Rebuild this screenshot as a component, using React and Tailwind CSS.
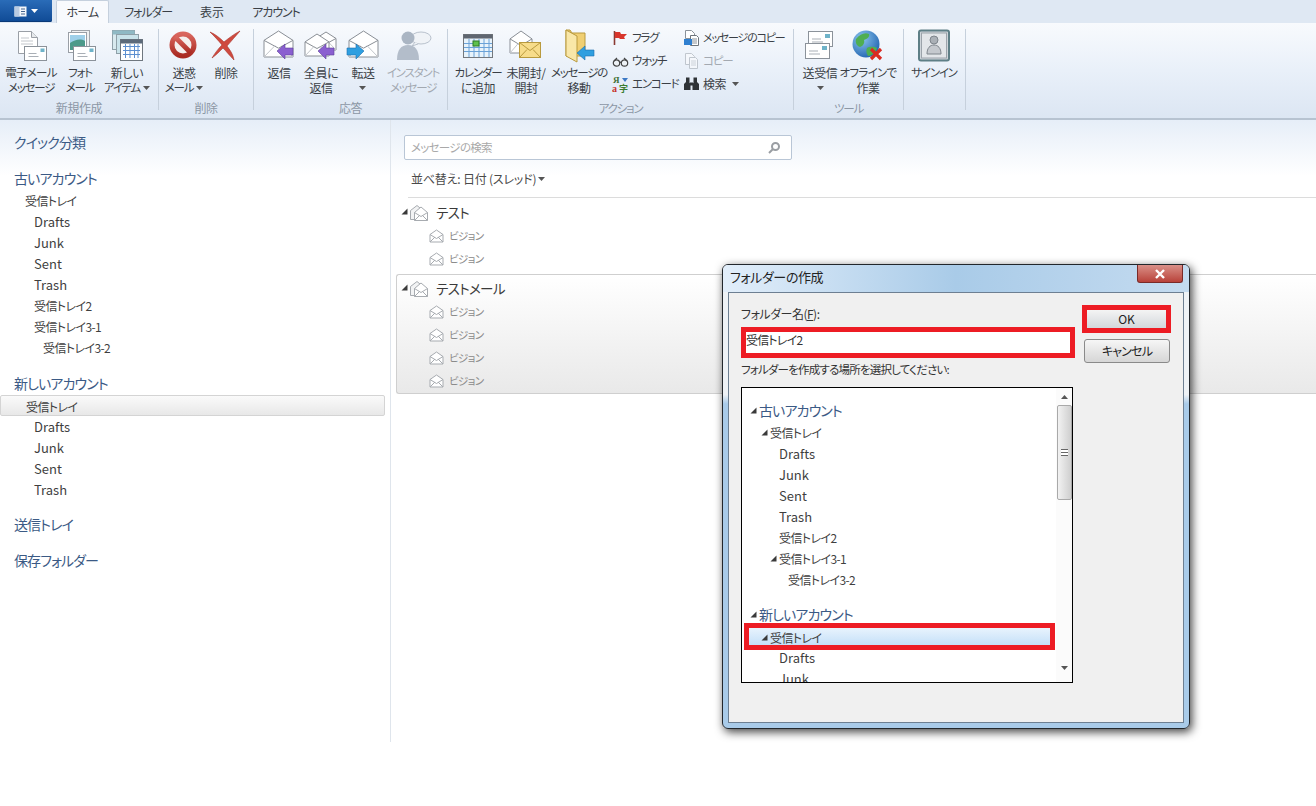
// ribbon labels: the katakana in the shot is much narrower than the kanji
const ribbonText = (s) =>
  s.length > 7
    ? "text-[11px] tracking-[-1.2px]"
    : /^[ァ-ヶーの]+$/.test(s)
      ? "text-[11.5px] tracking-[-1.2px]"
      : /[ァ-ヶ]/.test(s)
        ? "text-[11.5px] tracking-[-0.7px]"
        : "text-[12px] tracking-[-0.4px]";
const rowText = (s) => (/[ァ-ヶ]/.test(s) ? "text-[12px] tracking-[-0.6px]" : "text-[13px]");

function Tri({ className = "" }) {
  return (
    <svg width="7" height="7" viewBox="0 0 7 7" className={className}>
      <polygon points="6.5,0.5 6.5,6.5 0.5,6.5" fill="#3a3a3a" />
    </svg>
  );
}

function Caret({ className = "" }) {
  return (
    <svg width="7" height="4" viewBox="0 0 7 4" className={className}>
      <polygon points="0,0 7,0 3.5,4" fill="#555" />
    </svg>
  );
}

function Envelope({ x = 0, y = 0, w = 30, h = 26, fill = "#fff", stroke = "#8a8f96" }) {
  const top = y + h * 0.36;
  return (
    <g>
      <path d={`M${x} ${top}L${x + w / 2} ${y}L${x + w} ${top}V${y + h}H${x}Z`} fill={fill} stroke={stroke} />
      <path d={`M${x} ${top}L${x + w / 2} ${y + h * 0.66}L${x + w} ${top}`} fill="none" stroke={stroke} />
      <path d={`M${x} ${y + h}L${x + w * 0.38} ${y + h * 0.56}M${x + w} ${y + h}L${x + w * 0.62} ${y + h * 0.56}`} stroke="#c2c6cb" fill="none" />
    </g>
  );
}

function MiniMail({ x, y, w = 22, h = 14 }) {
  return (
    <g>
      <rect x={x} y={y} width={w} height={h} fill="#fff" stroke="#8b929a" />
      <rect x={x + w - 6} y={y + 2} width="4" height="3.5" fill="#6fb3c9" />
      <path d={`M${x + 4} ${y + 7}h8M${x + 4} ${y + 10}h10`} stroke="#a9afb6" />
    </g>
  );
}

function LeftArrow({ x, y, color }) {
  return <path d={`M${x} ${y}l8-7v4h8v7h-8v4z`} fill={color} stroke="#5d3f97" strokeWidth="0.6" />;
}

function Big({ children, w = 34 }) {
  return <svg width={w} height="34" viewBox={`0 0 ${w} 34`}>{children}</svg>;
}

const icons = {
  mail: (
    <Big>
      <path d="M4.5 2.5h13l6 6v16h-19z" fill="#fff" stroke="#9a9fa6" />
      <path d="M17.5 2.5v6h6" fill="#e6e9ec" stroke="#9a9fa6" />
      <path d="M7 9h8M7 12h12M7 15h12" stroke="#c3c7cc" />
      <MiniMail x={10.5} y={17.5} />
    </Big>
  ),
  photo: (
    <Big>
      <rect x="8.5" y="1.5" width="18" height="20" fill="#eef0f2" stroke="#a0a5ab" />
      <rect x="5.5" y="3.5" width="18" height="20" fill="#fff" stroke="#9a9fa6" />
      <rect x="7" y="6" width="15" height="15" fill="#4d9a8a" />
      <path d="M7 6h15v6C17 9 12 11 7 14z" fill="#9ed0ea" />
      <MiniMail x={10.5} y={17.5} />
    </Big>
  ),
  items: (
    <Big>
      <rect x="2.5" y="1.5" width="22" height="19" fill="#d8e9ee" stroke="#8fa0a8" />
      <rect x="2.5" y="1.5" width="22" height="4" fill="#8fb9c4" />
      <rect x="6.5" y="5.5" width="22" height="19" fill="#c9e3ea" stroke="#8fa0a8" />
      <rect x="10.5" y="10.5" width="22" height="21" fill="#fff" stroke="#6f777f" />
      <rect x="10.5" y="10.5" width="22" height="4" fill="#5c6a7a" />
      <path d="M13 17.5h17M13 21.5h17M13 25.5h17M15.5 15v14M20 15v14M24.5 15v14M28 15v14" stroke="#5c8fd0" />
    </Big>
  ),
  block: (
    <Big>
      <defs>
        <linearGradient id="rd" x1="0" y1="0" x2="0" y2="1"><stop offset="0" stopColor="#d9665e" /><stop offset="1" stopColor="#a92a22" /></linearGradient>
      </defs>
      <circle cx="16" cy="16" r="11" fill="#f4efee" stroke="url(#rd)" strokeWidth="5" />
      <path d="M8 8l16 16" stroke="url(#rd)" strokeWidth="5" />
    </Big>
  ),
  del: (
    <Big>
      <path d="M1 3c5 2 10 6 14 10c5-4 10-8 16-11c-4 5-9 10-13 15c3 4 6 8 7 14c-4-4-8-9-11-12c-4 4-7 7-11 10c3-5 6-9 10-13C9 11 5 7 1 3z" fill="#cf4a3f" stroke="#a8322a" strokeWidth="0.6" />
    </Big>
  ),
  reply: (
    <Big>
      <Envelope x={2} y={2} w={29} h={26} />
      <LeftArrow x={15} y={22} color="#8a5fd0" />
    </Big>
  ),
  replyAll: (
    <Big>
      <Envelope x={12} y={3} w={20} h={18} />
      <Envelope x={1} y={5} w={24} h={22} />
      <LeftArrow x={14} y={22} color="#8a5fd0" />
    </Big>
  ),
  forward: (
    <Big>
      <Envelope x={3} y={2} w={29} h={26} />
      <path d="M18 22l-8-7v4H1v7h9v4z" fill="#2f9fe0" stroke="#1c6fae" strokeWidth="0.6" />
    </Big>
  ),
  im: (
    <Big w={38}>
      <ellipse cx="27" cy="9" rx="10" ry="6" fill="#f0f3f7" stroke="#b9c2cd" />
      <path d="M21 13l-3 4 6-2" fill="#f0f3f7" stroke="#b9c2cd" />
      <circle cx="14" cy="9" r="6.5" fill="#aab5c3" />
      <path d="M3 31c0-10 4-15 11-15s11 5 11 15z" fill="#b3bdca" />
    </Big>
  ),
  cal: (
    <Big>
      <rect x="2.5" y="5.5" width="29" height="23" fill="#e8f3fb" stroke="#74787d" />
      <rect x="2.5" y="5.5" width="29" height="4" fill="#5f6670" />
      <path d="M3 14.5h28M3 18.5h28M3 22.5h28M8 10v18M13 10v18M18 10v18M23 10v18M28 10v18" stroke="#6aa2d8" />
      <rect x="12" y="12" width="6" height="5" fill="#5fc14d" stroke="#2e7d25" />
    </Big>
  ),
  unread: (
    <Big>
      <Envelope x={1} y={2} w={22} h={22} />
      <rect x="10.5" y="13.5" width="21" height="15" fill="#f7dc8a" stroke="#b99a3e" />
      <path d="M10.5 13.5l10.5 8 10.5-8M10.5 28.5l7.5-8M31.5 28.5l-7.5-8" fill="none" stroke="#b99a3e" />
    </Big>
  ),
  move: (
    <Big>
      <path d="M4 1h4l2 3h13v23H4z" fill="#f0cf73" stroke="#b99a3e" />
      <path d="M4 1l11 6v26L4 27z" fill="#f9e7a8" stroke="#b99a3e" />
      <path d="M15 24l8-7v4h9v6h-9v4z" fill="#2f9fe0" stroke="#1c6fae" strokeWidth="0.6" />
    </Big>
  ),
  sendRecv: (
    <Big>
      <rect x="5.5" y="2.5" width="24" height="15" fill="#fff" stroke="#8b929a" />
      <rect x="22" y="5" width="5" height="4" fill="#6fb3c9" />
      <path d="M9 10h9M9 13h11" stroke="#a9afb6" />
      <rect x="2.5" y="14.5" width="24" height="15" fill="#fff" stroke="#8b929a" />
      <rect x="19" y="17" width="5" height="4" fill="#6fb3c9" />
      <path d="M6 22h9M6 25h11" stroke="#a9afb6" />
    </Big>
  ),
  offline: (
    <Big>
      <defs>
        <radialGradient id="gl" cx="0.35" cy="0.3" r="0.8"><stop offset="0" stopColor="#8cc6ee" /><stop offset="1" stopColor="#1c5fae" /></radialGradient>
      </defs>
      <circle cx="15" cy="15" r="13.5" fill="url(#gl)" />
      <path d="M5 10c4-5 9-7 13-5c1 3-2 5-5 6c1 3-1 6-4 7c-3-1-5-4-4-8zM16 19c4-2 8-1 10 0c-1 4-5 8-9 8c-2-3-2-6-1-8z" fill="#4fae52" />
      <path d="M20 20l10 10M30 20L20 30" stroke="#d92b22" strokeWidth="3.2" />
    </Big>
  ),
  signin: (
    <Big>
      <rect x="2" y="1.5" width="30" height="30" rx="2" fill="#cfd5da" stroke="#5e7f86" strokeWidth="2" />
      <rect x="4.5" y="4" width="25" height="25" fill="#e3e6e9" stroke="#9ca3aa" />
      <circle cx="17" cy="11" r="4" fill="#aab0b6" stroke="#7e858c" />
      <path d="M10 25c0-6 3-9 7-9s7 3 7 9z" fill="#c5c9ce" stroke="#7e858c" />
    </Big>
  ),
};

const smallIcons = {
  flag: (
    <svg width="17" height="16" viewBox="0 0 17 16">
      <path d="M2.5 1v14" stroke="#8a3a32" strokeWidth="1.6" />
      <path d="M3 2h5l1 2h6l-3 3 1 2H8L7 8H3z" fill="#d8352c" />
    </svg>
  ),
  watch: (
    <svg width="17" height="16" viewBox="0 0 17 16" fill="#eef2f6" stroke="#444" strokeWidth="1.2">
      <circle cx="4.5" cy="10" r="3.2" />
      <circle cx="12.5" cy="10" r="3.2" />
      <path d="M7.7 9.5c.8-.6 1-.6 1.6 0M2 8l3-3M15 8l-3-3" fill="none" />
    </svg>
  ),
  encode: (
    <svg width="17" height="18" viewBox="0 0 17 18" fontFamily="'Liberation Serif',serif" fontWeight="700">
      <text x="1" y="8" fontSize="9" fill="#3f6f35">Я</text>
      <polygon points="10,3 16,3 13,7" fill="#3c78c4" />
      <text x="0" y="17" fontSize="10" fill="#c7342b">a</text>
      <text x="7" y="17" fontSize="9" fill="#3c7d30" fontFamily="'Noto Sans CJK JP',sans-serif">字</text>
    </svg>
  ),
  copyMsg: (
    <svg width="17" height="18" viewBox="0 0 17 18">
      <path d="M2.5 1.5h6l3 3v5h-9z" fill="#fff" stroke="#8b929a" />
      <path d="M7.5 6.5h6l2 2v8h-8z" fill="#fff" stroke="#6e757c" />
      <path d="M9 10h5M9 12h5M9 14h5" stroke="#8b929a" />
      <rect x="1" y="10" width="8" height="6" fill="#2f7fd0" />
    </svg>
  ),
  copy: (
    <svg width="17" height="18" viewBox="0 0 17 18" opacity="0.45">
      <path d="M2.5 1.5h6l3 3v8h-9z" fill="#fff" stroke="#8b929a" />
      <path d="M6.5 5.5h6l2 2v9h-8z" fill="#fff" stroke="#8b929a" />
      <path d="M8 9h5M8 11h5M8 13h5" stroke="#a8aeb4" />
    </svg>
  ),
  find: (
    <svg width="17" height="16" viewBox="0 0 17 16" fill="#2f3337">
      <rect x="3" y="1.5" width="3.5" height="5" />
      <rect x="10.5" y="1.5" width="3.5" height="5" />
      <path d="M1 14V8l2-2h3l1.5 2v6zM9.5 14V8l1.5-2h3l2 2v6z" />
      <rect x="7" y="6.5" width="3" height="3" />
    </svg>
  ),
};

const groups = [
  {
    label: "新規作成",
    w: "w-[159px]",
    pl: "pl-[4px]",
    btns: [
      { w: "w-[54px]", icon: "mail", lines: ["電子メール", "メッセージ"] },
      { w: "w-[44px]", icon: "photo", lines: ["フォト", "メール"] },
      { w: "w-[50px]", icon: "items", lines: ["新しい", "アイテム"], caret: true },
    ],
  },
  {
    label: "削除",
    w: "w-[95px]",
    pl: "pl-[2px]",
    btns: [
      { w: "w-[46px]", icon: "block", lines: ["迷惑", "メール"], caret: true },
      { w: "w-[38px]", icon: "del", lines: ["削除"] },
    ],
  },
  {
    label: "応答",
    w: "w-[194px]",
    pl: "pl-[4px]",
    btns: [
      { w: "w-[42px]", icon: "reply", lines: ["返信"] },
      { w: "w-[42px]", icon: "replyAll", lines: ["全員に", "返信"] },
      { w: "w-[42px]", icon: "forward", lines: ["転送"], under: true },
      { w: "w-[58px]", icon: "im", lines: ["インスタント", "メッセージ"], muted: true },
    ],
  },
  {
    label: "アクション",
    w: "w-[346px]",
    pl: "pl-[5px]",
    btns: [
      { w: "w-[50px]", icon: "cal", lines: ["カレンダー", "に追加"] },
      { w: "w-[46px]", icon: "unread", lines: ["未開封/", "開封"] },
      { w: "w-[60px]", icon: "move", lines: ["メッセージの", "移動"] },
    ],
    small: true,
  },
  {
    label: "ツール",
    w: "w-[110px]",
    pl: "pl-[2px]",
    btns: [
      { w: "w-[48px]", icon: "sendRecv", lines: ["送受信"], under: true },
      { w: "w-[48px]", icon: "offline", lines: ["オフラインで", "作業"] },
    ],
  },
  {
    label: "",
    w: "w-[62px]",
    pl: "pl-[2px]",
    btns: [{ w: "w-[56px]", icon: "signin", lines: ["サインイン"] }],
  },
];

function RibbonButton({ b }) {
  return (
    <div className={`flex shrink-0 flex-col items-center ${b.w}`}>
      <div className="flex h-[34px] items-center justify-center">{icons[b.icon]}</div>
      <div className={`mt-[2px] whitespace-nowrap text-center leading-[15px] ${b.muted ? "text-[#a3a9b1]" : "text-[#3a3f46]"}`}>
        {b.lines.map((l, i) => (
          <div key={i} className={`flex items-center justify-center gap-[3px] ${ribbonText(l)}`}>
            {l}
            {b.caret && i === b.lines.length - 1 && <Caret />}
          </div>
        ))}
        {b.under && (
          <div className="flex h-[15px] items-center justify-center">
            <Caret />
          </div>
        )}
      </div>
    </div>
  );
}

function SmallItem({ icon, text, muted, caret }) {
  return (
    <div className={`flex h-[23px] items-center gap-[3px] whitespace-nowrap ${ribbonText(text)} ${muted ? "text-[#a3a9b1]" : "text-[#3a3f46]"}`}>
      <span className="flex w-[17px] justify-center">{smallIcons[icon]}</span>
      {text}
      {caret && <Caret className="ml-[3px]" />}
    </div>
  );
}

function Ribbon() {
  return (
    <div className="flex h-[97px] border-b-2 border-[#b7c3d1] bg-gradient-to-b from-[#f8fafd] via-[#e9f0f9] to-[#dce6f3] pt-[6px]">
      {groups.map((g, i) => (
        <div key={i} className={`flex h-[81px] shrink-0 flex-col border-r border-[#c6d0dc] ${g.w}`}>
          <div className={`flex h-[71px] shrink-0 ${g.pl}`}>
            {g.btns.map((b, j) => <RibbonButton key={j} b={b} />)}
            {g.small && (
              <div className="ml-[3px] -mt-[3px] flex gap-[3px]">
                <div className="w-[68px]">
                  <SmallItem icon="flag" text="フラグ" />
                  <SmallItem icon="watch" text="ウォッチ" />
                  <SmallItem icon="encode" text="エンコード" />
                </div>
                <div>
                  <SmallItem icon="copyMsg" text="メッセージのコピー" />
                  <SmallItem icon="copy" text="コピー" muted />
                  <SmallItem icon="find" text="検索" caret />
                </div>
              </div>
            )}
          </div>
          <div className={`h-[16px] shrink-0 text-center leading-[16px] text-[#8c97a5] ${ribbonText(g.label)}`}>{g.label}</div>
        </div>
      ))}
    </div>
  );
}

function Tabs() {
  return (
    <div className="flex h-[23px] items-end bg-[#dfe8f3] text-[12px] text-[#3a3f46]">
      <div className="flex h-[22px] w-[52px] items-center justify-center gap-[4px] self-start rounded-br-[2px] bg-gradient-to-b from-[#2a6cb8] to-[#0f4a95] shadow-[inset_0_-1px_0_#0b3a78]">
        <svg width="13" height="11" viewBox="0 0 13 11">
          <rect x="0.5" y="0.5" width="12" height="10" fill="#f4f7fb" />
          <rect x="0.5" y="0.5" width="5" height="10" fill="#b9cbe2" />
          <path d="M7 3h4M7 5.5h4M7 8h4" stroke="#44648f" />
        </svg>
        <svg width="7" height="4" viewBox="0 0 7 4"><polygon points="0,0 7,0 3.5,4" fill="#fff" /></svg>
      </div>
      <div className="ml-[4px] flex h-[23px] w-[53px] items-center justify-center rounded-t-[2px] border-x border-t border-[#c5d0dd] bg-[#f8fafd] tracking-[-0.8px]">ホーム</div>
      <div className="flex h-[23px] w-[78px] items-center justify-center tracking-[-1.1px]">フォルダー</div>
      <div className="flex h-[23px] w-[50px] items-center justify-center">表示</div>
      <div className="flex h-[23px] w-[78px] items-center justify-center tracking-[-1.1px]">アカウント</div>
    </div>
  );
}

const sideGroups = [
  { head: "クイック分類", h: "mb-[14px]" },
  {
    head: "古いアカウント",
    h: "",
    rows: [
      ["受信トレイ", 1], ["Drafts", 2], ["Junk", 2], ["Sent", 2], ["Trash", 2],
      ["受信トレイ2", 2], ["受信トレイ3-1", 2], ["受信トレイ3-2", 3],
    ],
  },
  {
    head: "新しいアカウント",
    h: "mt-[15px]",
    rows: [["受信トレイ", 1, true], ["Drafts", 2], ["Junk", 2], ["Sent", 2], ["Trash", 2]],
  },
  { head: "送信トレイ", h: "mt-[14px]" },
  { head: "保存フォルダー", h: "mt-[14px]" },
];

const indent = { 1: "pl-[25px]", 2: "pl-[34px]", 3: "pl-[43px]" };

function Sidebar() {
  return (
    <div className="h-[622px] w-[391px] shrink-0 border-r border-[#dfe5ec] pt-[12px] pr-[5px]">
      {sideGroups.map((g) => (
        <div key={g.head}>
          <div className={`h-[22px] pl-[14px] text-[14px] leading-[20px] tracking-[-0.9px] text-[#3b5a85] ${g.h}`}>{g.head}</div>
          {g.rows?.map(([t, lv, sel], i) => (
            <div
              key={i}
              className={`h-[21px] leading-[22px] text-[#3f3f3f] ${rowText(t)} ${indent[lv]} ${sel ? "rounded-[2px] border border-[#d4d4d4] bg-gradient-to-b from-[#fafafa] to-[#e8e8e8] pl-[24px] leading-[18px]" : ""}`}
            >
              {t}
            </div>
          ))}
        </div>
      ))}
    </div>
  );
}

function ThreadIcon() {
  return (
    <svg width="20" height="18" viewBox="0 0 20 18" fill="#fff" stroke="#a7abb0">
      <path d="M1.5 6.5L8 1.5l6 5v9H1.500z" fill="#f2f3f4" />
      <path d="M5.5 8.5L12 3l6.5 5.5v8h-13z" />
      <path d="M5.5 8.5l6.5 4 6.5-4M5.5 16.5l5-5M18.5 16.5l-5-5" fill="none" />
    </svg>
  );
}

function MailIcon() {
  return (
    <svg width="15" height="14" viewBox="0 0 15 14" fill="#fff" stroke="#a7abb0">
      <path d="M1 5.5L7.5 1 14 5.5V13H1z" />
      <path d="M1 5.5l6.5 4 6.5-4M1 13l5-5M14 13L9 8" fill="none" />
    </svg>
  );
}

function Thread({ title, count, boxed }) {
  return (
    <div className={boxed ? "h-[120px] rounded-l-[3px] border border-r-0 border-[#cfcfcf] bg-gradient-to-b from-white to-[#e9e9e9] pt-[2px] pl-[4px]" : "h-[76px] pt-[3px] pl-[10px]"}>
      <div className="flex h-[23px] items-center gap-[1px]">
        <Tri className="mt-[-3px]" />
        <ThreadIcon />
        <span className="ml-[6px] text-[13.5px] tracking-[-0.6px] text-[#3a3a3a]">{title}</span>
      </div>
      {Array.from({ length: count }, (_, i) => (
        <div key={i} className="flex h-[23px] items-center gap-[5px] pl-[28px] text-[10.5px] tracking-[-0.6px] text-[#8a8a8a]">
          <MailIcon />
          ビジョン
        </div>
      ))}
    </div>
  );
}

function MessageList() {
  return (
    <div className="min-w-0 flex-1">
      <div className="ml-[13px] mt-[15px] flex h-[25px] w-[388px] items-center justify-between rounded-[2px] border border-[#b9c6d6] bg-white px-[6px] text-[11.5px] tracking-[-0.7px] text-[#a9a9a9]">
        メッセージの検索
        <svg width="14" height="14" viewBox="0 0 14 14" fill="none" stroke="#9a9ea3" strokeWidth="2" className="mr-[4px]">
          <circle cx="8.5" cy="5.5" r="3.5" />
          <path d="M6 8l-4 4" />
        </svg>
      </div>
      <div className="ml-[17px] mt-[8px] flex h-[30px] items-start gap-[2px] border-b border-[#dcdcdc] pl-[3px] text-[12px] leading-[22px] tracking-[-0.2px] text-[#4a4a4a]">
        並べ替え: 日付 (スレッド)
        <Caret className="mt-[9px]" />
      </div>
      <Thread title="テスト" count={2} />
      <div className="ml-[5px]">
        <Thread title="テストメール" count={4} boxed />
      </div>
    </div>
  );
}

const treeRows = [
  { t: "古いアカウント", head: true, tri: true, pad: "pl-[8px]" },
  { t: "受信トレイ", tri: true, pad: "pl-[19px]" },
  { t: "Drafts", pad: "pl-[37px]" },
  { t: "Junk", pad: "pl-[37px]" },
  { t: "Sent", pad: "pl-[37px]" },
  { t: "Trash", pad: "pl-[37px]" },
  { t: "受信トレイ2", pad: "pl-[37px]" },
  { t: "受信トレイ3-1", tri: true, pad: "pl-[28px]" },
  { t: "受信トレイ3-2", pad: "pl-[46px]" },
  { t: "新しいアカウント", head: true, tri: true, pad: "pl-[8px]", gap: true },
  { t: "受信トレイ", tri: true, sel: true, pad: "pl-[12px]" },
  { t: "Drafts", pad: "pl-[37px]" },
  { t: "Junk", pad: "pl-[37px]" },
];

function TreeRow({ r }) {
  if (r.sel) {
    return (
      <div className="ml-[2px] -my-[3px] h-[27px] w-[311px] border-[5px] border-[#ed1c24]">
        <div className={`flex h-[17px] items-center gap-[2px] bg-gradient-to-b from-[#e8f3fd] to-[#c5e0f8] pt-[2px] text-[#3f3f3f] ${rowText(r.t)} ${r.pad}`}>
          <Tri />
          {r.t}
        </div>
      </div>
    );
  }
  return (
    <div className={`flex gap-[2px] ${r.head ? "h-[22px] items-start text-[14px] leading-[20px] tracking-[-0.9px] text-[#3b5a85]" : `h-[21px] items-center text-[#3f3f3f] ${rowText(r.t)}`} ${r.gap ? "mt-[14px]" : ""} ${r.pad}`}>
      {r.tri && <Tri className={r.head ? "mt-[7px]" : ""} />}
      {r.t}
    </div>
  );
}

function TreeBox() {
  return (
    <div className="relative mt-[9px] h-[296px] w-[332px] overflow-hidden border border-black bg-white">
      <div className="pt-[12px]">
        {treeRows.map((r, i) => <TreeRow key={i} r={r} />)}
      </div>
      {/* scrollbar */}
      <div className="absolute right-0 top-0 flex h-full w-[16px] flex-col items-center bg-[#fbfbfb]">
        <svg width="7" height="4" viewBox="0 0 7 4" className="mt-[7px]"><polygon points="3.5,0 7,4 0,4" fill="#555" /></svg>
        <div className="mt-[6px] flex h-[95px] w-[15px] items-center justify-center rounded-[2px] border border-[#a9a9a9] bg-gradient-to-r from-[#f2f2f2] to-[#cfcfcf]">
          <div className="h-[7px] w-[7px] border-y border-[#666] bg-[linear-gradient(#fff_0,#fff_33%,#666_33%,#666_66%,#fff_66%)]" />
        </div>
        <svg width="7" height="4" viewBox="0 0 7 4" className="mt-[166px]"><polygon points="0,0 7,0 3.5,4" fill="#555" /></svg>
      </div>
    </div>
  );
}

function Dialog() {
  return (
    <div className="absolute left-[722px] top-[264px] h-[465px] w-[468px] rounded-[6px] border border-[#22272c] bg-gradient-to-b from-[#eef2f6] from-[28%] to-[#a9cbe9] to-[30%] shadow-[2px_3px_10px_rgba(0,0,0,0.75)]">
      <div className="flex h-[27px] justify-between rounded-t-[5px] bg-gradient-to-r from-[#e2eefa] via-[#a9cbe8] to-[#c4dbf0] pl-[7px]">
        <span className="pt-[3px] text-[13px] leading-[18px] tracking-[-0.4px] text-[#222]">フォルダーの作成</span>
        <div className="mr-[6px] flex h-[18px] w-[46px] items-center justify-center rounded-b-[3px] border border-t-0 border-[#7a2a28] bg-gradient-to-b from-[#d98f88] to-[#b8413a]">
          <svg width="12" height="10" viewBox="0 0 12 10" stroke="#fff" strokeWidth="2.4"><path d="M2 1l8 8M10 1L2 9" /></svg>
        </div>
      </div>
      <div className="mx-[5px] flex h-[431px] gap-[7px] border border-[#6d7f92] bg-[#f0f0f0] pl-[12px] pt-[12px]">
        <div className="w-[334px]">
          <div className="text-[12px] leading-[18px] tracking-[-0.5px] text-[#333]">フォルダー名(<u>F</u>):</div>
          <div className="mt-[4px] h-[31px] w-[334px] border-[5px] border-[#ed1c24] bg-white text-[12px] leading-[15px] tracking-[-0.8px] text-[#333]">受信トレイ2</div>
          <div className="mt-[2px] whitespace-nowrap text-[11.5px] leading-[18px] tracking-[-0.8px] text-[#333]">フォルダーを作成する場所を選択してください:</div>
          <TreeBox />
        </div>
        <div>
          <div className="h-[28px] w-[89px] border-[5px] border-[#ed1c24]">
            <div className="flex h-[18px] items-center justify-center bg-gradient-to-b from-[#f4f4f4] to-[#d3d8dc] text-[12px] text-[#222]">OK</div>
          </div>
          <div className="ml-[2px] mt-[6px] flex h-[24px] w-[86px] items-center justify-center rounded-[3px] border border-[#8a8a8a] bg-gradient-to-b from-[#f6f6f6] to-[#d6d6d6] text-[12px] tracking-[-0.8px] text-[#222]">キャンセル</div>
        </div>
      </div>
    </div>
  );
}

export default function App() {
  return (
    <div className="relative h-[806px] w-[1316px] overflow-hidden bg-white [font-family:'Noto_Sans_CJK_JP','Noto_Sans',sans-serif] [font-feature-settings:'palt']">
      <Tabs />
      <Ribbon />
      <div className="flex h-[622px] bg-gradient-to-b from-[#e6eef8] to-white to-[9%]">
        <Sidebar />
        <MessageList />
      </div>
      <Dialog />
    </div>
  );
}
